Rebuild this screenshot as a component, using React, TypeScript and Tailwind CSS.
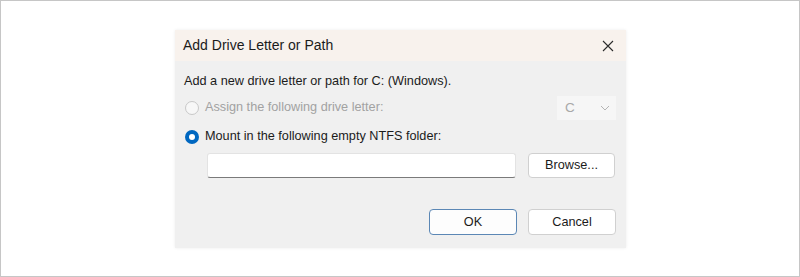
import React from "react";

function Radio({ checked, disabled }: { checked?: boolean; disabled?: boolean }) {
  if (checked) {
    return (
      <span className="flex h-[14px] w-[14px] items-center justify-center rounded-full bg-[#0067c0]">
        <span className="h-[6px] w-[6px] rounded-full bg-white" />
      </span>
    );
  }
  return (
    <span
      className={
        "h-[14px] w-[14px] rounded-full border bg-[#f7f7f7] " +
        (disabled ? "border-[#c8c8c8]" : "border-[#8a8a8a]")
      }
    />
  );
}

export default function App() {
  return (
    <div
      className="h-[277px] w-[800px] border border-[#c6c6c6] bg-white pl-[174px] pt-[29px]"
      style={{ fontFamily: '"Liberation Sans", Arial, sans-serif' }}
    >
      <div className="w-[451px] bg-[#f0f0f0] shadow-[0_0_3px_rgba(0,0,0,0.08)]">
        {/* title bar */}
        <div className="flex h-[31px] items-center justify-between bg-[#f8f2ed] pl-[8px] pr-[12px]">
          <span className="text-[14px] text-[#1b1b1b]">Add Drive Letter or Path</span>
          <svg width="12" height="12" viewBox="0 0 12 12" className="text-[#2b2b2b]">
            <path d="M1 1 L11 11 M11 1 L1 11" stroke="currentColor" strokeWidth="1.1" fill="none" />
          </svg>
        </div>

        {/* body */}
        <div className="flex flex-col pl-[9px] pr-[10px] pb-[13px] pt-[12px] text-[12.7px] text-[#1b1b1b]">
          <p className="leading-[16px]">Add a new drive letter or path for C: (Windows).</p>

          <div className="mt-[7px] flex h-[24px] items-center justify-between">
            <div className="flex items-center gap-[6px] pl-[1px]">
              <Radio disabled />
              <span className="text-[#a2a2a2]">Assign the following drive letter:</span>
            </div>
            <div className="flex h-[24px] w-[59px] items-center justify-between bg-[#f6f6f6] pl-[8px] pr-[6px] text-[13.5px] text-[#a8a8a8]">
              <span>C</span>
              <svg width="10" height="6" viewBox="0 0 10 6">
                <path d="M1 1 L5 5 L9 1" stroke="#b4b4b4" strokeWidth="1" fill="none" />
              </svg>
            </div>
          </div>

          <div className="mt-[7px] flex items-center gap-[6px] pl-[1px]">
            <Radio checked />
            <span>Mount in the following empty NTFS folder:</span>
          </div>

          <div className="mt-[7px] flex items-center pl-[23px]">
            <div className="h-[25px] w-[309px] rounded-[3px] border border-[#e3e3e3] border-b-[#7a7a7a] bg-white" />
            <button className="ml-[12px] h-[25px] w-[87px] rounded-[4px] border border-[#d0d0d0] bg-white text-[12.7px] text-[#1b1b1b]">
              Browse...
            </button>
          </div>

          <div className="mt-[31px] flex justify-end gap-[11px]">
            <button className="h-[26px] w-[88px] rounded-[4px] border-[1.5px] border-[#5b87b5] bg-[#fdfdfd] text-[12.7px] text-[#1b1b1b]">
              OK
            </button>
            <button className="h-[26px] w-[88px] rounded-[4px] border border-[#d0d0d0] bg-white text-[12.7px] text-[#1b1b1b]">
              Cancel
            </button>
          </div>
        </div>
      </div>
    </div>
  );
}
